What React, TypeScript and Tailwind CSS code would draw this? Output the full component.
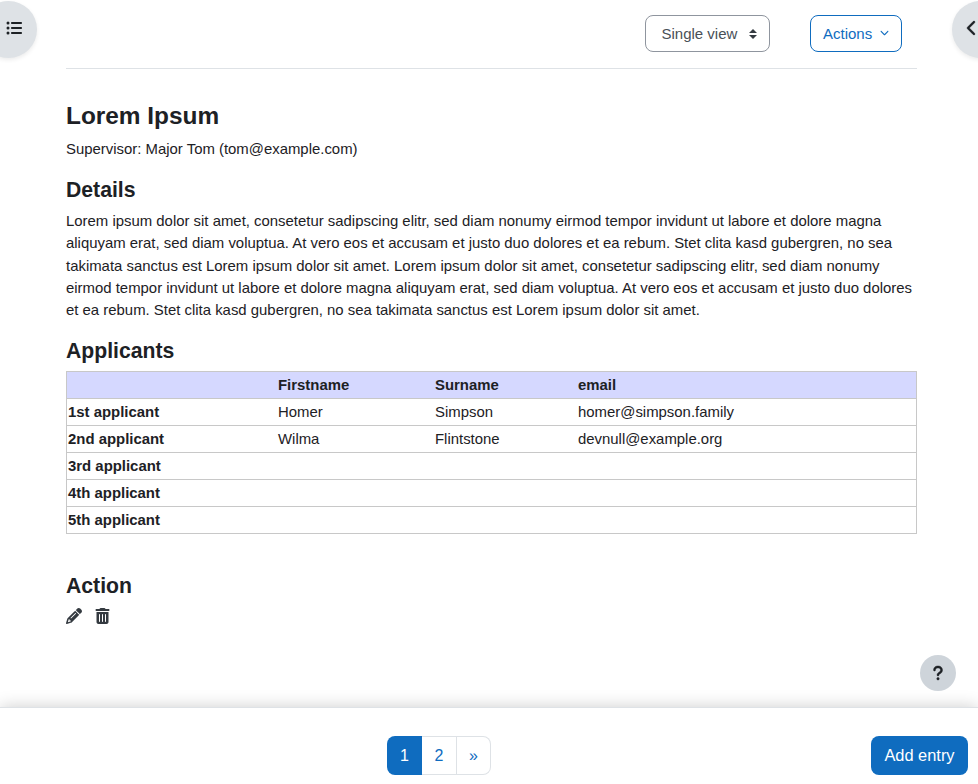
import { FaChevronDown, FaChevronLeft, FaListUl, FaPencil, FaQuestion, FaTrashCan } from "react-icons/fa6";

const applicants = [
  { label: "1st applicant", first: "Homer", last: "Simpson", email: "homer@simpson.family" },
  { label: "2nd applicant", first: "Wilma", last: "Flintstone", email: "devnull@example.org" },
  { label: "3rd applicant", first: "", last: "", email: "" },
  { label: "4th applicant", first: "", last: "", email: "" },
  { label: "5th applicant", first: "", last: "", email: "" },
];

function Toolbar() {
  return (
    <header className="flex h-[69px] items-start justify-end border-b border-[#dee2e6] pr-[15px] pt-[15px] text-[15px]">
      <button className="flex h-[37px] w-[125px] items-center justify-between rounded-lg border border-[#8f959e] pl-[15.5px] pr-3 text-[#495057]">
        <span className="pt-px">Single view</span>
        <svg viewBox="0 0 4 5" className="h-[10px] w-2 fill-[#343a40]">
          <path d="M2 0L0 2h4zm0 5L0 3h4z" />
        </svg>
      </button>
      <button className="ml-10 flex h-[37px] w-[92px] items-center justify-between rounded-lg border border-[#0f6cbf] px-3 text-[#0f6cbf]">
        <span className="pt-px">Actions</span>
        <FaChevronDown className="mb-0.5 size-[9px]" />
      </button>
    </header>
  );
}

function ApplicantTable() {
  return (
    <table className="w-[851px] table-fixed border-collapse border border-[#c8c8c8] text-left leading-[22px]">
      <colgroup>
        <col className="w-[210.5px]" />
        <col className="w-[157px]" />
        <col className="w-[143px]" />
        <col />
      </colgroup>
      <thead>
        <tr className="h-[27px] border-b border-[#c8c8c8] bg-[#d5d8ff]">
          <th className="p-px" />
          <th className="p-px">Firstname</th>
          <th className="p-px">Surname</th>
          <th className="p-px">email</th>
        </tr>
      </thead>
      <tbody>
        {applicants.map((a) => (
          <tr key={a.label} className="h-[27px] border-b border-[#c8c8c8]">
            <th className="p-px">{a.label}</th>
            <td className="p-px">{a.first}</td>
            <td className="p-px">{a.last}</td>
            <td className="p-px">{a.email}</td>
          </tr>
        ))}
      </tbody>
    </table>
  );
}

export default function App() {
  return (
    <div className="relative flex h-[784px] w-[978px] flex-col overflow-hidden bg-white font-['Liberation_Sans',Arial,sans-serif] text-[14.91px] leading-[22.25px] text-[#1d2125]">
      <button className="absolute left-[-20px] top-px flex h-[57px] w-[57px] items-center rounded-full bg-[#dee2e6] pb-[3px] pl-[26px] shadow-[0_2px_4px_rgba(0,0,0,0.08)]">
        <FaListUl className="size-4" />
      </button>
      <button className="absolute left-[952px] top-px flex h-[57px] w-[57px] items-center rounded-full bg-[#dee2e6] pb-[3px] pl-[12px] shadow-[0_2px_4px_rgba(0,0,0,0.08)]">
        <FaChevronLeft className="size-4 stroke-current [stroke-width:12]" />
      </button>

      <main className="ml-[66px] w-[851px] grow">
        <Toolbar />
        <h2 className="mt-[32px] text-[24.4px] font-bold leading-[29px]">Lorem Ipsum</h2>
        <p className="mt-[8px]">Supervisor: Major Tom (tom@example.com)</p>
        <h3 className="mt-[16.75px] text-[21.2px] font-bold leading-[26px]">Details</h3>
        <p className="mt-[7px]">
          Lorem ipsum dolor sit amet, consetetur sadipscing elitr, sed diam nonumy eirmod tempor invidunt ut labore et
          dolore magna aliquyam erat, sed diam voluptua. At vero eos et accusam et justo duo dolores et ea rebum. Stet
          clita kasd gubergren, no sea takimata sanctus est Lorem ipsum dolor sit amet. Lorem ipsum dolor sit amet,
          consetetur sadipscing elitr, sed diam nonumy eirmod tempor invidunt ut labore et dolore magna aliquyam erat,
          sed diam voluptua. At vero eos et accusam et justo duo dolores et ea rebum. Stet clita kasd gubergren, no sea
          takimata sanctus est Lorem ipsum dolor sit amet.
        </p>
        <h3 className="mt-[16.75px] text-[21.2px] font-bold leading-[26px]">Applicants</h3>
        <div className="mt-[7px]">
          <ApplicantTable />
        </div>
        <h3 className="mt-[39px] text-[21.2px] font-bold leading-[26px]">Action</h3>
        <div className="mt-[9px] flex items-center gap-[13px] text-[#343a40]">
          <FaPencil className="size-4" />
          <FaTrashCan className="h-4 w-[15px]" />
        </div>
      </main>

      <button className="absolute left-[920px] top-[655px] flex size-9 items-center justify-center rounded-full bg-[#ced4da]">
        <FaQuestion className="size-4 stroke-current [stroke-width:14]" />
      </button>

      <footer className="flex h-[77px] shrink-0 items-start border-t border-[#dee2e6] bg-white pl-[387px] pr-[10px] pt-[28px] text-base shadow-[0_0_16px_rgba(0,0,0,0.2)]">
        <nav className="flex h-[39px] text-[#0f6cbf]">
          <span className="flex w-[35px] items-center justify-center rounded-l-lg bg-[#0f6cbf] text-white">1</span>
          <span className="flex w-[35px] items-center justify-center border-y border-r border-[#dee2e6]">2</span>
          <span className="flex w-[34px] items-center justify-center rounded-r-lg border-y border-r border-[#dee2e6]">
            »
          </span>
        </nav>
        <button className="ml-auto h-[39px] w-[97px] rounded-lg bg-[#0f6cbf] text-[16.4px] text-white">Add entry</button>
      </footer>
    </div>
  );
}
